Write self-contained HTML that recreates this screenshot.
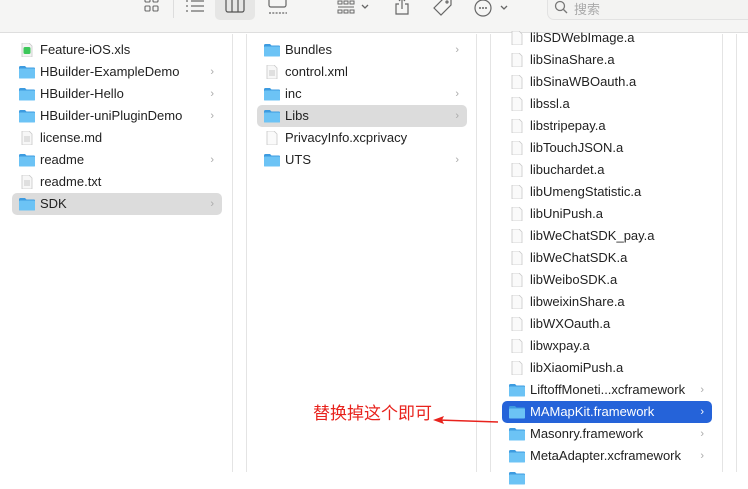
<!DOCTYPE html>
<html><head><meta charset="utf-8"><style>
*{margin:0;padding:0;box-sizing:border-box}
body{width:748px;height:472px;overflow:hidden;background:#fff;font-family:"Liberation Sans","Noto Sans CJK SC",sans-serif;font-size:13px;color:#222;position:relative}
.tb{position:absolute;left:0;top:0;width:748px;height:33px;background:#f5f5f4;border-bottom:1px solid #dedede}
.gap{position:absolute;top:34px;bottom:0;background:#fff;border-left:1px solid #e4e4e4;border-right:1px solid #e4e4e4}
.r{position:absolute;height:22px;line-height:22px;white-space:nowrap}
.r svg{position:absolute;left:6px;top:4px}
.r span{position:absolute;left:28px;top:0}
.r i{position:absolute;right:8px;top:0;font-style:normal;color:#aaa;font-size:11px}
.sel{background:#dcdcdc;border-radius:5px}
.blue{background:#2563d9;border-radius:5px;color:#fff}
.blue i{color:#fff}
</style></head><body>
<div class="tb">
<svg style="position:absolute;left:144px;top:0" width="16" height="14"><g fill="none" stroke="#666" stroke-width="1.1"><rect x="1" y="-3" width="5" height="5" rx="1"/><rect x="9" y="-3" width="5" height="5" rx="1"/><rect x="1" y="6" width="5" height="5" rx="1"/><rect x="9" y="6" width="5" height="5" rx="1"/></g></svg>
<div style="position:absolute;left:173px;top:0;width:1px;height:18px;background:#ddd"></div>
<svg style="position:absolute;left:185px;top:0" width="20" height="14"><g stroke="#666" stroke-width="1.2"><line x1="1" y1="1" x2="3" y2="1"/><line x1="6" y1="1" x2="19" y2="1"/><line x1="1" y1="6" x2="3" y2="6"/><line x1="6" y1="6" x2="19" y2="6"/><line x1="1" y1="11" x2="3" y2="11"/><line x1="6" y1="11" x2="19" y2="11"/></g></svg>
<div style="position:absolute;left:215px;top:-5px;width:40px;height:25px;background:#e6e6e5;border-radius:5px"></div>
<svg style="position:absolute;left:225px;top:0" width="20" height="14"><g fill="none" stroke="#555" stroke-width="1.2"><rect x="1" y="-3" width="18" height="15" rx="2"/><line x1="7" y1="-3" x2="7" y2="12"/><line x1="13" y1="-3" x2="13" y2="12"/></g></svg>
<svg style="position:absolute;left:267px;top:0" width="22" height="16"><g fill="none" stroke="#666" stroke-width="1.2"><rect x="2" y="-3" width="17" height="10" rx="2"/><line x1="2" y1="13" x2="20" y2="13" stroke-dasharray="2 1.3"/></g></svg>
<svg style="position:absolute;left:337px;top:0" width="40" height="16"><g fill="none" stroke="#666" stroke-width="1"><rect x="1" y="1" width="4" height="3"/><rect x="7" y="1" width="4" height="3"/><rect x="13" y="1" width="4" height="3"/><rect x="1" y="10" width="4" height="3"/><rect x="7" y="10" width="4" height="3"/><rect x="13" y="10" width="4" height="3"/><line x1="1" y1="7" x2="17" y2="7"/><path d="M25 5l3 3 3-3" stroke-width="1.3"/></g></svg>
<svg style="position:absolute;left:394px;top:0" width="16" height="16"><g fill="none" stroke="#666" stroke-width="1.2"><path d="M5 4H2v10h12V4h-3M8 9V-2M5 1l3-3 3 3"/></g></svg>
<svg style="position:absolute;left:430px;top:-4px" width="24" height="22"><g fill="none" stroke="#666" stroke-width="1.2"><path d="M14 2l7 0 0 7-10 10-7-7z"/><circle cx="17" cy="6" r="1"/></g></svg>
<svg style="position:absolute;left:473px;top:-2px" width="38" height="22"><g fill="none" stroke="#666" stroke-width="1.2"><circle cx="10" cy="10" r="8"/><path d="M28 8l3 3 3-3" stroke-width="1.3"/></g><g fill="#666"><circle cx="7" cy="10" r="1"/><circle cx="10" cy="10" r="1"/><circle cx="13" cy="10" r="1"/></g></svg>
<div style="position:absolute;left:547px;top:-8px;width:210px;height:28px;border:1px solid #e2e2e2;border-radius:7px;background:#f3f3f2"></div>
<svg style="position:absolute;left:554px;top:0" width="14" height="14"><g fill="none" stroke="#777" stroke-width="1.3"><circle cx="6" cy="6" r="4.5"/><line x1="9.5" y1="9.5" x2="13" y2="13"/></g></svg>
<div style="position:absolute;left:574px;top:-1px;color:#aaa;font-size:13px">搜索</div>
</div>

<div class="gap" style="left:232px;width:15px"></div>
<div class="gap" style="left:476px;width:15px"></div>
<div class="gap" style="left:722px;width:15px"></div>

<svg width="0" height="0" style="position:absolute"><defs>
<symbol id="f" viewBox="0 0 18 14"><path d="M1 2.5Q1 1 2.5 1H7l1.5 1.5H16Q17 2.5 17 3.5V12.5Q17 13.5 16 13.5H2Q1 13.5 1 12.5Z" fill="#3d9be0"/><path d="M1 4.5Q1 3.5 2 3.5H16Q17 3.5 17 4.5V12.5Q17 13.5 16 13.5H2Q1 13.5 1 12.5Z" fill="#6cc3f5"/></symbol>
<symbol id="d" viewBox="0 0 18 14"><path d="M4 0H11L14 3V14H4Z" fill="#f7f7f7" stroke="#c8c8c8" stroke-width=".8"/><g stroke="#bbb" stroke-width=".8"><line x1="6" y1="6" x2="12" y2="6"/><line x1="6" y1="8" x2="12" y2="8"/><line x1="6" y1="10" x2="12" y2="10"/></g></symbol>
<symbol id="b" viewBox="0 0 18 14"><path d="M4 0H11L14 3V14H4Z" fill="#fafafa" stroke="#c8c8c8" stroke-width=".8"/></symbol>
<symbol id="x" viewBox="0 0 18 14"><path d="M4 0H11L14 3V14H4Z" fill="#f3f3f3" stroke="#c8c8c8" stroke-width=".8"/><rect x="5.5" y="4" width="7" height="7" rx="1.5" fill="#3cc75a"/></symbol>
</defs></svg>

<!-- col1 -->
<div class="r" style="left:12px;top:39px;width:210px"><svg width="18" height="14"><use href="#x"/></svg><span>Feature-iOS.xls</span></div>
<div class="r" style="left:12px;top:61px;width:210px"><svg width="18" height="14"><use href="#f"/></svg><span>HBuilder-ExampleDemo</span><i>›</i></div>
<div class="r" style="left:12px;top:83px;width:210px"><svg width="18" height="14"><use href="#f"/></svg><span>HBuilder-Hello</span><i>›</i></div>
<div class="r" style="left:12px;top:105px;width:210px"><svg width="18" height="14"><use href="#f"/></svg><span>HBuilder-uniPluginDemo</span><i>›</i></div>
<div class="r" style="left:12px;top:127px;width:210px"><svg width="18" height="14"><use href="#d"/></svg><span>license.md</span></div>
<div class="r" style="left:12px;top:149px;width:210px"><svg width="18" height="14"><use href="#f"/></svg><span>readme</span><i>›</i></div>
<div class="r" style="left:12px;top:171px;width:210px"><svg width="18" height="14"><use href="#d"/></svg><span>readme.txt</span></div>
<div class="r sel" style="left:12px;top:193px;width:210px"><svg width="18" height="14"><use href="#f"/></svg><span>SDK</span><i>›</i></div>

<!-- col2 -->
<div class="r" style="left:257px;top:39px;width:210px"><svg width="18" height="14"><use href="#f"/></svg><span>Bundles</span><i>›</i></div>
<div class="r" style="left:257px;top:61px;width:210px"><svg width="18" height="14"><use href="#d"/></svg><span>control.xml</span></div>
<div class="r" style="left:257px;top:83px;width:210px"><svg width="18" height="14"><use href="#f"/></svg><span>inc</span><i>›</i></div>
<div class="r sel" style="left:257px;top:105px;width:210px"><svg width="18" height="14"><use href="#f"/></svg><span>Libs</span><i>›</i></div>
<div class="r" style="left:257px;top:127px;width:210px"><svg width="18" height="14"><use href="#b"/></svg><span>PrivacyInfo.xcprivacy</span></div>
<div class="r" style="left:257px;top:149px;width:210px"><svg width="18" height="14"><use href="#f"/></svg><span>UTS</span><i>›</i></div>

<!-- col3 -->
<div class="r" style="left:502px;top:27px;width:210px"><svg width="18" height="14"><use href="#b"/></svg><span>libSDWebImage.a</span></div>
<div class="r" style="left:502px;top:49px;width:210px"><svg width="18" height="14"><use href="#b"/></svg><span>libSinaShare.a</span></div>
<div class="r" style="left:502px;top:71px;width:210px"><svg width="18" height="14"><use href="#b"/></svg><span>libSinaWBOauth.a</span></div>
<div class="r" style="left:502px;top:93px;width:210px"><svg width="18" height="14"><use href="#b"/></svg><span>libssl.a</span></div>
<div class="r" style="left:502px;top:115px;width:210px"><svg width="18" height="14"><use href="#b"/></svg><span>libstripepay.a</span></div>
<div class="r" style="left:502px;top:137px;width:210px"><svg width="18" height="14"><use href="#b"/></svg><span>libTouchJSON.a</span></div>
<div class="r" style="left:502px;top:159px;width:210px"><svg width="18" height="14"><use href="#b"/></svg><span>libuchardet.a</span></div>
<div class="r" style="left:502px;top:181px;width:210px"><svg width="18" height="14"><use href="#b"/></svg><span>libUmengStatistic.a</span></div>
<div class="r" style="left:502px;top:203px;width:210px"><svg width="18" height="14"><use href="#b"/></svg><span>libUniPush.a</span></div>
<div class="r" style="left:502px;top:225px;width:210px"><svg width="18" height="14"><use href="#b"/></svg><span>libWeChatSDK_pay.a</span></div>
<div class="r" style="left:502px;top:247px;width:210px"><svg width="18" height="14"><use href="#b"/></svg><span>libWeChatSDK.a</span></div>
<div class="r" style="left:502px;top:269px;width:210px"><svg width="18" height="14"><use href="#b"/></svg><span>libWeiboSDK.a</span></div>
<div class="r" style="left:502px;top:291px;width:210px"><svg width="18" height="14"><use href="#b"/></svg><span>libweixinShare.a</span></div>
<div class="r" style="left:502px;top:313px;width:210px"><svg width="18" height="14"><use href="#b"/></svg><span>libWXOauth.a</span></div>
<div class="r" style="left:502px;top:335px;width:210px"><svg width="18" height="14"><use href="#b"/></svg><span>libwxpay.a</span></div>
<div class="r" style="left:502px;top:357px;width:210px"><svg width="18" height="14"><use href="#b"/></svg><span>libXiaomiPush.a</span></div>
<div class="r" style="left:502px;top:379px;width:210px"><svg width="18" height="14"><use href="#f"/></svg><span>LiftoffMoneti...xcframework</span><i>›</i></div>
<div class="r blue" style="left:502px;top:401px;width:210px"><svg width="18" height="14"><use href="#f"/></svg><span>MAMapKit.framework</span><i>›</i></div>
<div class="r" style="left:502px;top:423px;width:210px"><svg width="18" height="14"><use href="#f"/></svg><span>Masonry.framework</span><i>›</i></div>
<div class="r" style="left:502px;top:445px;width:210px"><svg width="18" height="14"><use href="#f"/></svg><span>MetaAdapter.xcframework</span><i>›</i></div>
<div class="r" style="left:502px;top:467px;width:210px"><svg width="18" height="14"><use href="#f"/></svg></div>

<!-- annotation -->
<div style="position:absolute;left:313px;top:401px;color:#e8231d;font-size:17px;font-family:'Noto Sans CJK SC',sans-serif;line-height:22px">替换掉这个即可</div>
<svg style="position:absolute;left:432px;top:413px" width="70" height="12"><line x1="6" y1="7" x2="66" y2="9" stroke="#e8231d" stroke-width="1.5"/><path d="M1 7L12 3L10 7L12 11Z" fill="#e8231d"/></svg>
</body></html>
